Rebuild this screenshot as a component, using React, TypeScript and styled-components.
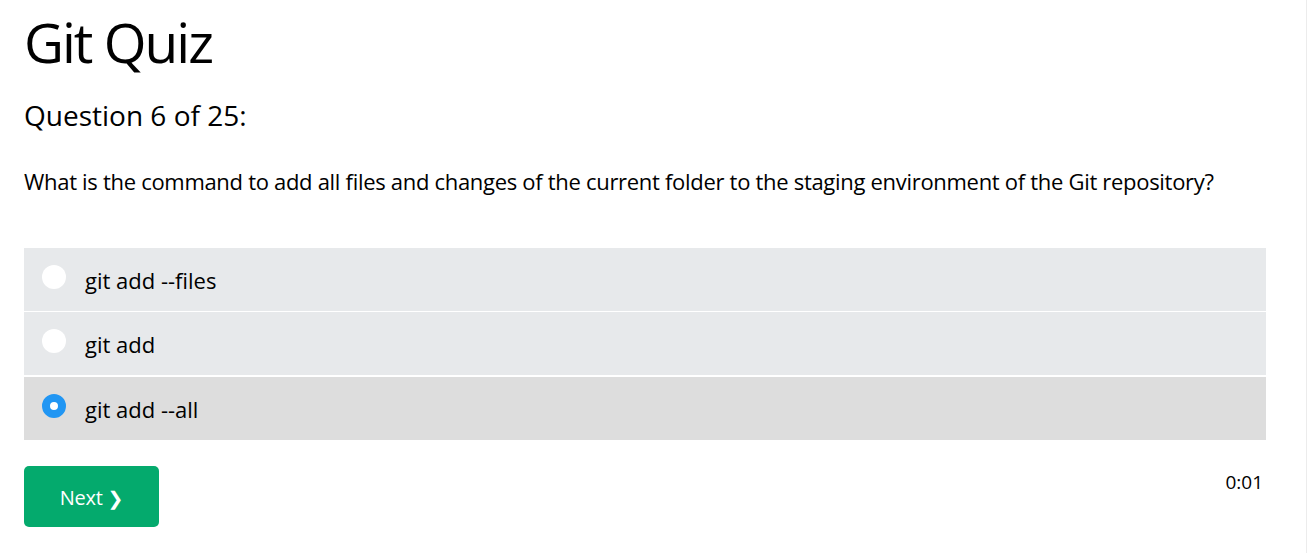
import React, { useState } from 'react';
import styled, { createGlobalStyle } from 'styled-components';

const GlobalStyle = createGlobalStyle`
  html, body {
    margin: 0;
    padding: 0;
    background: #fff;
  }
  body {
    font-family: 'Open Sans', 'Noto Sans', sans-serif;
    color: #000;
  }
`;

const Page = styled.div`
  box-sizing: border-box;
  width: 1307px;
  min-height: 553px;
  padding: 10px 40px 0 24px;
  border-right: 1px solid #ececec;
`;

const Title = styled.h1`
  margin: 0;
  font-size: 55px;
  line-height: 64px;
  font-weight: 400;
  letter-spacing: -2px;
`;

const Counter = styled.h2`
  margin: 23px 0 0;
  font-size: 28px;
  line-height: 36px;
  font-weight: 400;
`;

const QuestionText = styled.p`
  margin: 34px 0 0;
  font-size: 22px;
  line-height: 28px;
  letter-spacing: -0.3px;
`;

const Options = styled.div`
  display: flex;
  flex-direction: column;
  gap: 1px;
  margin-top: 53px;
`;

const Option = styled.label<{ $selected: boolean }>`
  box-sizing: border-box;
  display: flex;
  align-items: flex-start;
  gap: 19px;
  height: 63px;
  padding: 17px 18px 0;
  background: ${(p) => (p.$selected ? '#dddddd' : '#e7e9eb')};
  margin-top: ${(p) => (p.$selected ? '1px' : '0')};
  cursor: pointer;
`;

const Radio = styled.span<{ $checked: boolean }>`
  box-sizing: border-box;
  flex: none;
  width: 24px;
  height: 24px;
  border-radius: 50%;
  background: #fff;
  border: ${(p) => (p.$checked ? '8px solid #2196f3' : 'none')};
`;

const OptionText = styled.span`
  margin-top: 1px;
  font-size: 22px;
  line-height: 28px;
`;

const Footer = styled.div`
  display: flex;
  justify-content: space-between;
  align-items: flex-start;
  margin-top: 26px;
`;

const NextButton = styled.button`
  display: flex;
  align-items: center;
  justify-content: center;
  gap: 5px;
  width: 135px;
  height: 61px;
  padding: 2px 0 0;
  border: none;
  border-radius: 5px;
  background: #04aa6d;
  color: #fff;
  font-family: inherit;
  font-size: 20px;
  line-height: 28px;
  letter-spacing: -0.3px;
  cursor: pointer;
`;

const Chevron = styled.span`
  font-family: 'DejaVu Sans', sans-serif;
  font-size: 19px;
  font-weight: 700;
`;

const Timer = styled.div`
  padding-top: 4px;
  margin-right: 3px;
  font-size: 19px;
  line-height: 24px;
`;

const answers = ['git add --files', 'git add', 'git add --all'];

export default function App() {
  const [picked, setPicked] = useState(2);
  return (
    <>
      <GlobalStyle />
      <Page>
        <Title>Git Quiz</Title>
        <Counter>Question 6 of 25:</Counter>
        <QuestionText>
          What is the command to add all files and changes of the current folder to the staging environment of the Git repository?
        </QuestionText>
        <Options>
          {answers.map((a, i) => (
            <Option key={i} $selected={picked === i} onClick={() => setPicked(i)}>
              <Radio $checked={picked === i} />
              <OptionText>{a}</OptionText>
            </Option>
          ))}
        </Options>
        <Footer>
          <NextButton>
            <span>Next</span>
            <Chevron>❯</Chevron>
          </NextButton>
          <Timer>0:01</Timer>
        </Footer>
      </Page>
    </>
  );
}
